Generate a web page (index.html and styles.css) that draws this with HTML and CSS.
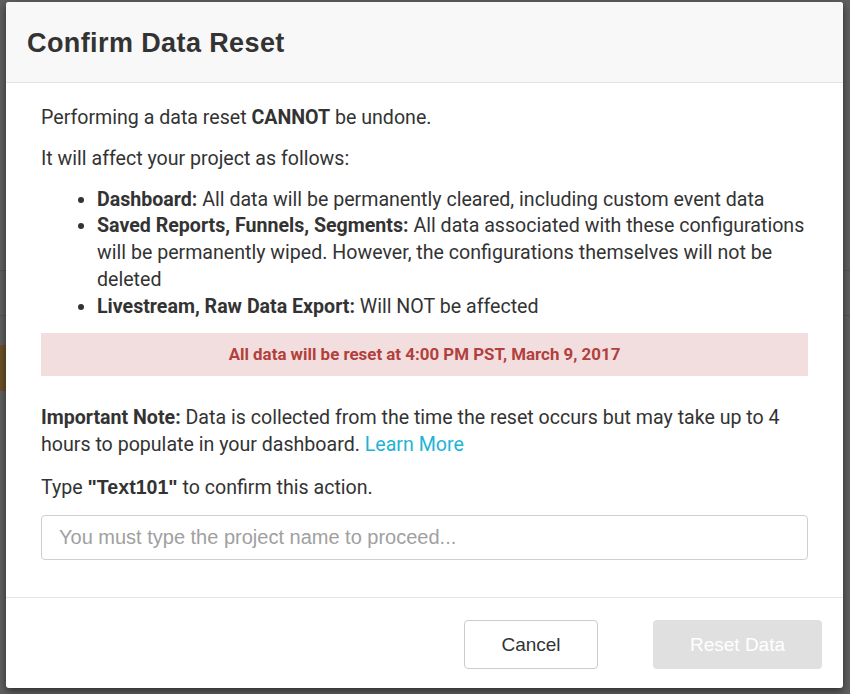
FILE: index.html
```html
<!DOCTYPE html>
<html>
<head>
<meta charset="utf-8">
<link rel="stylesheet" href="styles.css">
</head>
<body>
<div class="page">
  <div class="page-stripe stripe-a"></div>
  <div class="page-stripe stripe-b"></div>
  <div class="page-orange"></div>
</div>
<div class="overlay">
  <div class="modal">
    <div class="modal-header">
      <h1 class="modal-title">Confirm Data Reset</h1>
    </div>
    <div class="modal-body">
      <p class="para">Performing a data reset <b>CANNOT</b> be undone.</p>
      <p class="para para-lead">It will affect your project as follows:</p>
      <ul class="effects">
        <li><b>Dashboard:</b> All data will be permanently cleared, including custom event data</li>
        <li><b>Saved Reports, Funnels, Segments:</b> All data associated with these configurations will be permanently wiped. However, the configurations themselves will not be deleted</li>
        <li><b>Livestream, Raw Data Export:</b> Will NOT be affected</li>
      </ul>
      <div class="alert">All data will be reset at 4:00 PM PST, March 9, 2017</div>
      <p class="para note"><b>Important Note:</b> Data is collected from the time the reset occurs but may take up to 4 hours to populate in your dashboard. <a class="link" href="#">Learn More</a></p>
      <p class="para confirm">Type <b class="proj">"Text101"</b> to confirm this action.</p>
      <input class="name-input" type="text" placeholder="You must type the project name to proceed...">
    </div>
    <div class="modal-footer">
      <button class="btn btn-cancel">Cancel</button>
      <button class="btn btn-reset" disabled>Reset Data</button>
    </div>
  </div>
</div>
</body>
</html>
```
FILE: styles.css
```css
html, body {
  margin: 0;
  padding: 0;
}
body {
  width: 850px;
  height: 694px;
  background: #6a6a6a;
  overflow: hidden;
  position: relative;
  font-family: Roboto, "Liberation Sans", sans-serif;
}
.page {
  position: absolute;
  inset: 0;
}
.page-stripe {
  position: absolute;
  left: 0;
  right: 0;
  height: 1px;
  background: #5c5c5c;
}
.stripe-a { top: 270px; }
.stripe-b { top: 315px; }
.page-orange {
  position: absolute;
  left: 0;
  top: 345px;
  width: 8px;
  height: 46px;
  background: #7b5a26;
}
.overlay {
  position: absolute;
  inset: 0;
  background: rgba(40, 40, 40, 0.15);
}
.modal {
  position: absolute;
  left: 6px;
  top: 2px;
  width: 837px;
  height: 686px;
  background: #fff;
  border-radius: 3px;
  box-shadow: 0 3px 8px rgba(0, 0, 0, 0.55);
  display: flex;
  flex-direction: column;
  overflow: hidden;
}
.modal-header {
  height: 80px;
  flex: none;
  background: #f8f8f8;
  border-bottom: 1px solid #e3e3e3;
  display: flex;
  align-items: center;
  padding: 0 21px;
}
.modal-title {
  margin: 0;
  font-family: "Liberation Sans", Arial, sans-serif;
  font-weight: bold;
  font-size: 27px;
  letter-spacing: 0.4px;
  color: #333;
  position: relative;
  top: 1px;
}
.modal-body {
  flex: 1;
  padding: 22px 35px 0 35px;
  color: #333;
  font-size: 19.6px;
  line-height: 26.75px;
}
.para {
  margin: 0 0 14px 0;
}
.para-lead {
  margin-bottom: 14px;
}
.effects {
  margin: 0;
  padding-left: 56px;
}
.alert {
  margin: 13px 0 0 0;
  height: 43px;
  background: #f2dede;
  color: #b2403d;
  font-weight: bold;
  font-size: 16.9px;
  display: flex;
  align-items: center;
  justify-content: center;
}
.note {
  margin-top: 29px;
  margin-bottom: 15px;
}
.link {
  color: #1eb4d6;
  text-decoration: none;
}
.proj {
  font-family: "Liberation Sans", Arial, sans-serif;
}
.confirm {
  margin-bottom: 13px;
}
.name-input {
  display: block;
  box-sizing: border-box;
  width: 100%;
  height: 45px;
  border: 1px solid #cfcfcf;
  border-radius: 4px;
  padding: 0 17px;
  font-family: "Liberation Sans", Arial, sans-serif;
  font-size: 20px;
  color: #333;
  outline: none;
}
.name-input::placeholder {
  color: #a0a0a0;
}
.modal-footer {
  flex: none;
  height: 91px;
  box-sizing: border-box;
  border-top: 1px solid #e5e5e5;
  display: flex;
  justify-content: flex-end;
  align-items: flex-start;
  padding: 22px 21px 0 0;
  gap: 55px;
}
.btn {
  height: 49px;
  border-radius: 4px;
  font-family: "Liberation Sans", Arial, sans-serif;
  font-size: 19px;
  cursor: pointer;
}
.btn-cancel {
  width: 134px;
  background: #fff;
  border: 1px solid #cccccc;
  color: #333;
}
.btn-reset {
  width: 169px;
  background: #e0e0e0;
  border: none;
  color: #fff;
}
```
